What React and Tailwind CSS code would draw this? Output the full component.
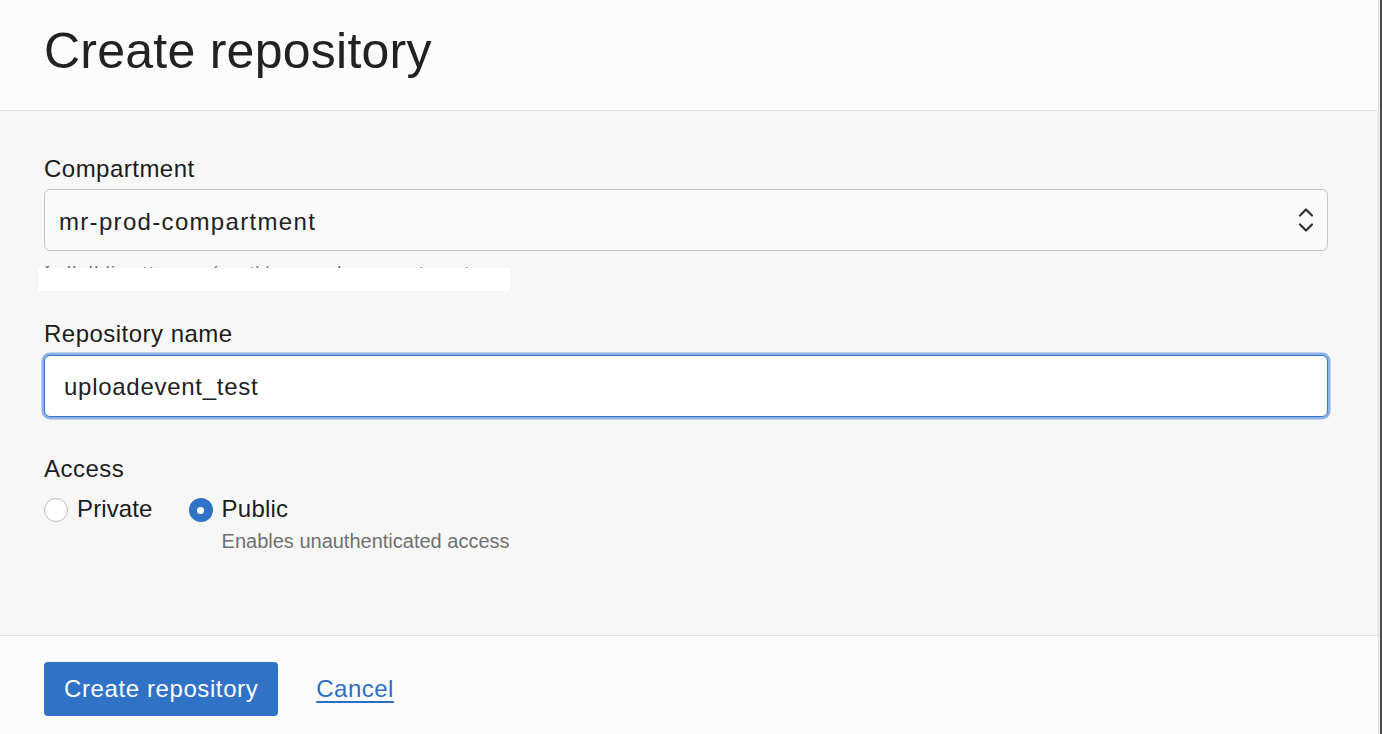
import React from "react";

// Create repository dialog (OCI container registry style)
const ChevronUpDown = () => (
  <svg width="16" height="28" viewBox="0 0 16 28" fill="none">
    <path d="M2 9.5 L8 3.5 L14 9.5" stroke="#303030" strokeWidth="2.2" strokeLinecap="round" strokeLinejoin="round" />
    <path d="M2 18.5 L8 24.5 L14 18.5" stroke="#303030" strokeWidth="2.2" strokeLinecap="round" strokeLinejoin="round" />
  </svg>
);

const Label = ({ children, className = "" }) => (
  <div className={`text-[24px] leading-[28px] tracking-[0.02em] text-[#1c1c1c] ${className}`}>{children}</div>
);

export default function App() {
  return (
    <div
      className="flex h-[734px] w-full overflow-hidden bg-[#fcfcfc]"
      style={{ fontFamily: '"Liberation Sans", Arial, sans-serif' }}
    >
      <div className="flex w-[1379px] flex-col border-r border-[#e4e4e4]">
        {/* Header */}
        <div className="h-[111px] shrink-0 border-b border-[#e2e2e2] bg-[#fcfcfc] pl-[44px] pt-[21px]">
          <h1 className="text-[50px] leading-[60px] tracking-[0.005em] text-[#222]">Create repository</h1>
        </div>

        {/* Body */}
        <div className="h-[525px] shrink-0 border-b border-[#e2e2e2] bg-[#f7f7f7] pl-[44px] pr-[50px] pt-[44px]">
          <Label>Compartment</Label>
          <div className="mt-[6px] flex h-[62px] w-[1284px] items-center justify-between rounded-[6px] border border-[#c4c4c4] bg-[#fafafa] pl-[14px] pr-[13px]">
            <span className="pt-[4px] text-[24px] tracking-[0.055em] text-[#222]">mr-prod-compartment</span>
            <ChevronUpDown />
          </div>
          <div className="relative mt-[8px] h-[28px]">
            <div className="text-[18px] leading-[28px] tracking-[0.08em] text-[#6a6a6a]">
              fsdkdbliwattcomn (root)/mr-prod-compartment
            </div>
            <div className="absolute left-[-6px] top-[9px] h-[23px] w-[472px] bg-white" />
          </div>

          <Label className="mt-[33px]">Repository name</Label>
          <div className="mt-[7px] flex h-[62px] w-[1284px] items-center rounded-[6px] border-[1.5px] border-[#3a74c2] bg-white pl-[19px] shadow-[0_0_0_2.5px_#8cb2e6]">
            <span className="pt-[2px] text-[24px] tracking-[0.03em] text-[#222]">uploadevent_test</span>
          </div>

          <Label className="mt-[38px]">Access</Label>
          <div className="mt-[12px] flex items-start">
            <div className="flex items-start gap-[9px]">
              <span className="mt-[3px] h-[24px] w-[24px] rounded-full border border-[#bdbdbd] bg-white" />
              <span className="text-[24px] leading-[28px] tracking-[0.005em] text-[#1c1c1c]">Private</span>
            </div>
            <div className="ml-[36px] flex items-start gap-[9px]">
              <span className="mt-[3px] flex h-[24px] w-[24px] items-center justify-center rounded-full bg-[#2f72c6]">
                <span className="h-[7px] w-[7px] rounded-full bg-white" />
              </span>
              <div>
                <div className="text-[24px] leading-[28px] tracking-[0.01em] text-[#1c1c1c]">Public</div>
                <div className="mt-[6px] text-[20px] leading-[24px] text-[#707070]">
                  Enables unauthenticated access
                </div>
              </div>
            </div>
          </div>
        </div>

        {/* Footer */}
        <div className="flex flex-1 items-start bg-[#fcfcfc] pl-[44px] pt-[26px]">
          <button className="h-[54px] rounded-[4px] bg-[#2f72c6] px-[20px] text-[24px] tracking-[0.025em] text-white">
            Create repository
          </button>
          <a href="#" className="ml-[38px] mt-[13px] text-[24px] leading-[28px] tracking-[0.02em] text-[#2f6fc3] underline underline-offset-[4px]">
            Cancel
          </a>
        </div>
      </div>
      <div className="w-[1px] bg-[#f0f0f0]" />
      <div className="flex-1 bg-[#4b4b4b]" />
    </div>
  );
}
